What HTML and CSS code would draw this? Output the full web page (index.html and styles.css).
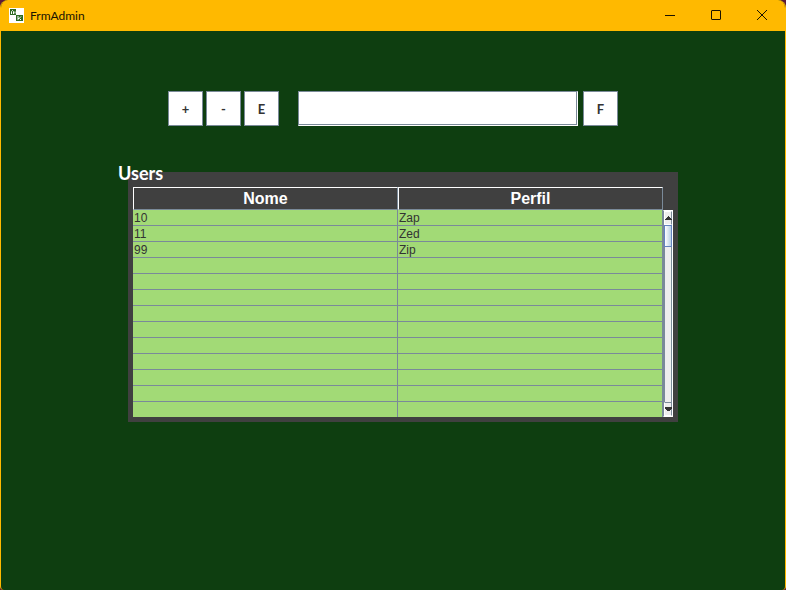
FILE: index.html
```html
<!DOCTYPE html>
<html lang="pt">
<head>
<meta charset="utf-8">
<meta name="viewport" content="width=device-width, initial-scale=1">
<title>FrmAdmin</title>
<link rel="stylesheet" href="styles.css">
</head>
<body>
<div class="window">
  <header class="titlebar">
    <svg class="app-icon" viewBox="0 0 15 15" aria-hidden="true">
      <path fill="#fff" d="M0 0h15v15H0z"/>
      <path fill="#2f6b22" d="M1 1h6v6H1zM7 7h7v6H7z"/>
      <path fill="none" stroke="#fff" d="M2.500 6V3.500L3.500 2.500L4.500 3.500V6M6 3.500v2M9 8v4M9 10.500h1l2-2M10.500 10.500l1.500 1.500"/>
    </svg>
    <h1 class="title">FrmAdmin</h1>
    <button class="caption" aria-label="Minimize"><svg viewBox="0 0 12 12"><path d="M1 5.500h10"/></svg></button>
    <button class="caption" aria-label="Maximize"><svg viewBox="0 0 12 12"><rect x="1.500" y="0.500" width="9" height="9" rx="0.500"/></svg></button>
    <button class="caption" aria-label="Close"><svg viewBox="0 0 12 12"><path d="M1 0l10 10M11 0L1 10"/></svg></button>
  </header>
  <main class="content">
    <form class="toolbar">
      <button type="button" class="tool" aria-label="Add">+</button>
      <button type="button" class="tool" aria-label="Remove">-</button>
      <button type="button" class="tool" aria-label="Edit">E</button>
      <input type="text" class="search" aria-label="Filter">
      <button type="button" class="tool" aria-label="Find">F</button>
    </form>
    <section class="panel" aria-labelledby="users">
      <h2 class="panel-title" id="users">Users</h2>
      <div class="grid">
        <div class="table-view">
        <table class="users">
          <thead><tr><th scope="col">Nome</th><th scope="col">Perfil</th></tr></thead>
          <tbody>
            <tr><td>10</td><td>Zap</td></tr>
            <tr><td>11</td><td>Zed</td></tr>
            <tr><td>99</td><td>Zip</td></tr>
            <tr><td></td><td></td></tr>
            <tr><td></td><td></td></tr>
            <tr><td></td><td></td></tr>
            <tr><td></td><td></td></tr>
            <tr><td></td><td></td></tr>
            <tr><td></td><td></td></tr>
            <tr><td></td><td></td></tr>
            <tr><td></td><td></td></tr>
            <tr><td></td><td></td></tr>
            <tr><td></td><td></td></tr>
          </tbody>
        </table>
        </div>
        <div class="scroll">
          <button class="arrow" aria-label="Scroll up"><svg viewBox="0 0 7 4"><path d="M3 0h1v1h1v1h1v1h1v1H0V3h1V2h1V1h1z"/></svg></button>
          <div class="thumb"></div>
          <div class="track"></div>
          <button class="arrow arrow-down" aria-label="Scroll down"><svg viewBox="0 0 7 4"><path d="M0 0h7v2H6v1H5v1H2V3H1V2H0z"/></svg></button>
        </div>
      </div>
    </section>
  </main>
</div>
</body>
</html>
```
FILE: styles.css
```css
* { box-sizing: border-box; }

body {
  margin: 0;
  background: #5c1a38;
  font-family: "Liberation Sans", Arial, sans-serif;
}

button {
  padding: 0;
  font: inherit;
}

svg { display: block; }

.window {
  display: flex;
  flex-direction: column;
  min-height: 100vh;
  border: solid #ffb900;
  border-width: 0 1px;
  border-radius: 8px 8px 4px 4px;
  background: #0e3e10;
  overflow: hidden;
}

.titlebar {
  display: flex;
  align-items: center;
  height: 31px;
  padding-left: 8px;
  background: #ffb900;
}

.app-icon { width: 15px; height: 15px; }

.title {
  flex: 1;
  margin: 0 0 0 6px;
  font: 12px Lato, sans-serif;
  color: #1a1300;
}

.caption {
  display: grid;
  place-items: center;
  width: 46px;
  height: 30px;
  border: 0;
  background: none;
}

.caption svg {
  width: 12px;
  height: 12px;
  fill: none;
  stroke: #1a1300;
}

.content { flex: 1; padding-top: 60px; }

.toolbar {
  display: flex;
  gap: 3px;
  margin: 0 167px;
}

.tool {
  width: 35px;
  height: 35px;
  border: 1px solid #7a8a99;
  background: #fff;
  color: #333;
  font: bold 13px Lato, sans-serif;
}

.search {
  flex: 1;
  min-width: 0;
  height: 35px;
  margin: 0 2px 0 16px;
  padding: 2px 4px;
  border: solid;
  border-width: 1px;
  border-color: #7a8a99 #fff #fff #7a8a99;
  background: #fff;
  box-shadow: inset -1px -1px #7a8a99;
  font-size: 12px;
}

.panel {
  margin: 46px 107px 0 127px;
  padding: 0 5px 5px;
  background: #404040;
}

.panel-title {
  height: 15px;
  margin: 0 0 0 -15px;
  color: #fff;
  font: bold 18px/2px Lato, sans-serif;
}

.grid { display: flex; }

.table-view { flex: 1; }

.users {
  width: 100%;
  table-layout: fixed;
  border-spacing: 0;
  color: #333;
  font-size: 12px;
}

.users th {
  height: 23px;
  padding: 0;
  border: 1px solid;
  border-color: #fff #7a8a99 #7a8a99 #fff;
  color: #fff;
  font-size: 16px;
  line-height: 20px;
}

.users td {
  height: 16px;
  padding: 1px 1px 0;
  border: solid #7a8a99;
  border-width: 0 1px 1px 0;
  background: #a2da76;
  line-height: 14px;
}

.users tbody tr:last-child td { height: 15px; border-bottom: 0; }

.scroll {
  display: flex;
  flex-direction: column;
  width: 10px;
  margin-top: 23px;
  border: 1px solid #fff;
  border-left-color: #7a8a99;
  background: #eee;
}

.arrow {
  display: grid;
  place-items: center;
  height: 14px;
  border: 1px solid #fff;
  border-right-color: #7a8a99;
  background: #eee;
}

.arrow-down { border-top-color: #7a8a99; }
.arrow svg { width: 7px; height: 4px; fill: #333; }

.thumb {
  height: 22px;
  border: 1px solid #6382bf;
  background: linear-gradient(90deg, #fff, #b8cfe5);
}

.track {
  flex: 1;
  border: solid #7a8a99;
  border-width: 0 1px;
}
```
